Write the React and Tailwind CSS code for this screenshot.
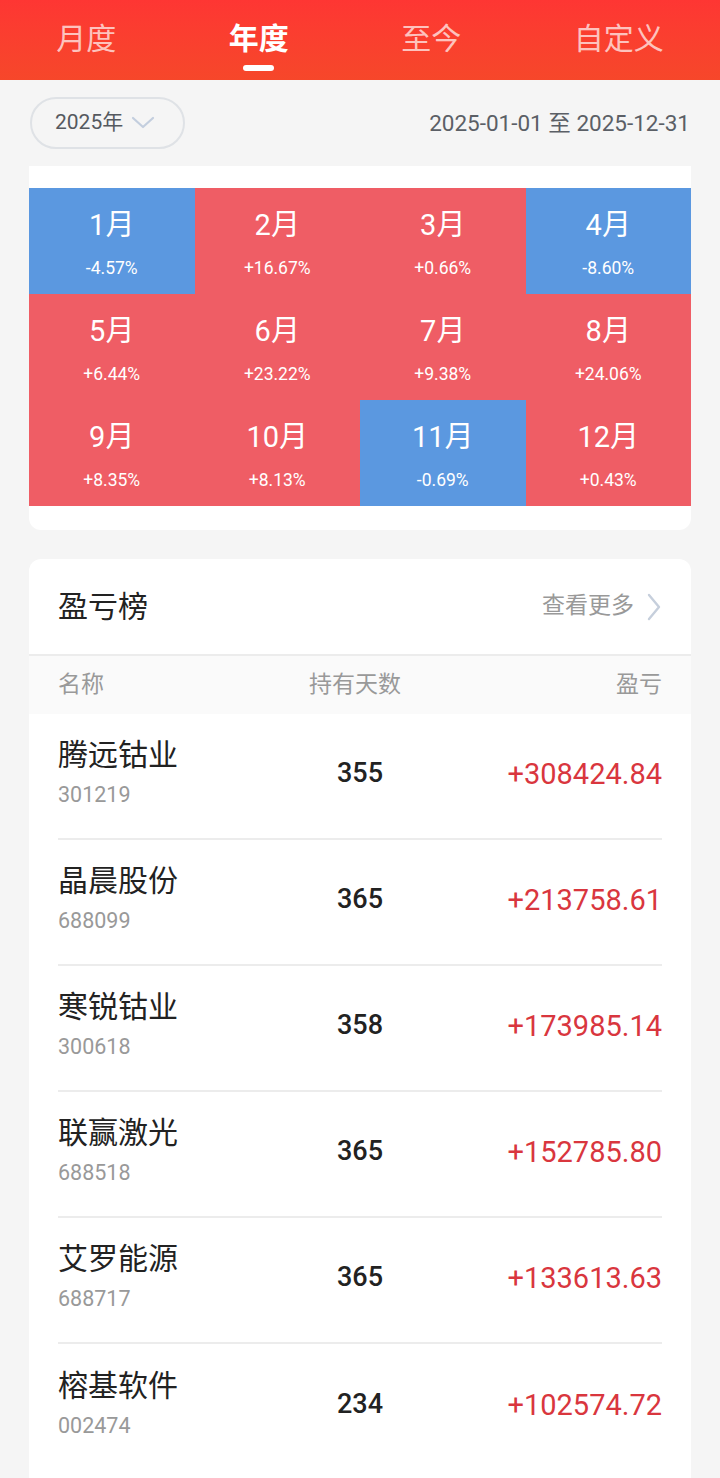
import React from "react";

const months = [
  { m: "1月", v: "-4.57%", up: false },
  { m: "2月", v: "+16.67%", up: true },
  { m: "3月", v: "+0.66%", up: true },
  { m: "4月", v: "-8.60%", up: false },
  { m: "5月", v: "+6.44%", up: true },
  { m: "6月", v: "+23.22%", up: true },
  { m: "7月", v: "+9.38%", up: true },
  { m: "8月", v: "+24.06%", up: true },
  { m: "9月", v: "+8.35%", up: true },
  { m: "10月", v: "+8.13%", up: true },
  { m: "11月", v: "-0.69%", up: false },
  { m: "12月", v: "+0.43%", up: true },
];

const rows = [
  { n: "腾远钴业", c: "301219", d: "355", p: "+308424.84" },
  { n: "晶晨股份", c: "688099", d: "365", p: "+213758.61" },
  { n: "寒锐钴业", c: "300618", d: "358", p: "+173985.14" },
  { n: "联赢激光", c: "688518", d: "365", p: "+152785.80" },
  { n: "艾罗能源", c: "688717", d: "365", p: "+133613.63" },
  { n: "榕基软件", c: "002474", d: "234", p: "+102574.72" },
];

const font = { fontFamily: '"Roboto", "Noto Sans CJK SC", sans-serif' };

export default function App() {
  return (
    <div className="w-[720px] min-h-[1478px] bg-[#f5f5f5] overflow-hidden" style={font}>
      <div className="h-[80px] bg-gradient-to-b from-[#fe3633] to-[#f6472a] flex justify-around items-start pt-[18px]">
        <div className="flex flex-col items-center text-[30px] leading-[42px] text-white/70">月度</div>
        <div className="flex flex-col items-center">
          <span className="text-[30px] leading-[42px] text-white font-bold">年度</span>
          <span className="mt-[5px] w-[31px] h-[6px] rounded-full bg-white"></span>
        </div>
        <div className="flex flex-col items-center text-[30px] leading-[42px] text-white/70">至今</div>
        <div className="flex flex-col items-center text-[30px] leading-[42px] text-white/70">自定义</div>
      </div>

      <div className="flex items-center justify-between px-[30px] h-[86px]">
        <div className="h-[52px] w-[155px] rounded-full border-2 border-[#dfe2e6] flex items-center pl-[23px] gap-[8px]">
          <span className="text-[21px] text-[#55595f]">2025年</span>
          <svg width="24" height="14" viewBox="0 0 24 14" fill="none">
            <path d="M2 2 L12 11 L22 2" stroke="#c3cede" strokeWidth="2.2" strokeLinecap="round" strokeLinejoin="round" />
          </svg>
        </div>
        <div className="text-[22.5px] text-[#5b5f66] pt-[2px]">2025-01-01 至 2025-12-31</div>
      </div>

      <div className="mx-[29px] bg-white rounded-b-[12px] pt-[22px] pb-[24px]">
        <div className="grid grid-cols-4">
          {months.map((x) => (
            <div
              key={x.m}
              className={
                "h-[106px] flex flex-col items-center pt-[19px] text-white " +
                (x.up ? "bg-[#ef5d65]" : "bg-[#5b98e0]")
              }
            >
              <span className="text-[29px] leading-[36px]">{x.m}</span>
              <span className="text-[17.5px] leading-[22px] mt-[14px]">{x.v}</span>
            </div>
          ))}
        </div>
      </div>

      <div className="mx-[29px] mt-[29px] bg-white rounded-t-[12px] pb-[20px]">
        <div className="h-[97px] flex items-center justify-between pl-[29px] pr-[29px] border-b-2 border-[#ececec]">
          <span className="text-[30px] text-[#222]">盈亏榜</span>
          <div className="flex items-center gap-[12px]">
            <span className="text-[23px] text-[#999]">查看更多</span>
            <svg width="16" height="28" viewBox="0 0 16 28" fill="none">
              <path d="M3 2 L13 14 L3 26" stroke="#c6cfdc" strokeWidth="2.4" strokeLinecap="round" strokeLinejoin="round" />
            </svg>
          </div>
        </div>
        <div className="h-[58px] bg-[#fafafa] grid grid-cols-3 items-center px-[29px] text-[23px] text-[#999]">
          <span>名称</span>
          <span className="text-center pr-[10px]">持有天数</span>
          <span className="text-right">盈亏</span>
        </div>
        <div className="px-[29px]">
          {rows.map((r, i) => (
            <div
              key={r.c}
              className={
                "h-[126px] grid grid-cols-3 items-center " +
                (i < rows.length - 1 ? "border-b-2 border-[#ececec]" : "")
              }
            >
              <div className="flex flex-col pb-[8px]">
                <span className="text-[30px] leading-[40px] text-[#222]">{r.n}</span>
                <span className="text-[21.5px] leading-[30px] mt-[5px] text-[#999]">{r.c}</span>
              </div>
              <div className="text-center text-[27px] font-medium text-[#222] pb-[5px]">{r.d}</div>
              <div className="text-right text-[29px] text-[#d9363e] pb-[3px]">{r.p}</div>
            </div>
          ))}
        </div>
      </div>
    </div>
  );
}
